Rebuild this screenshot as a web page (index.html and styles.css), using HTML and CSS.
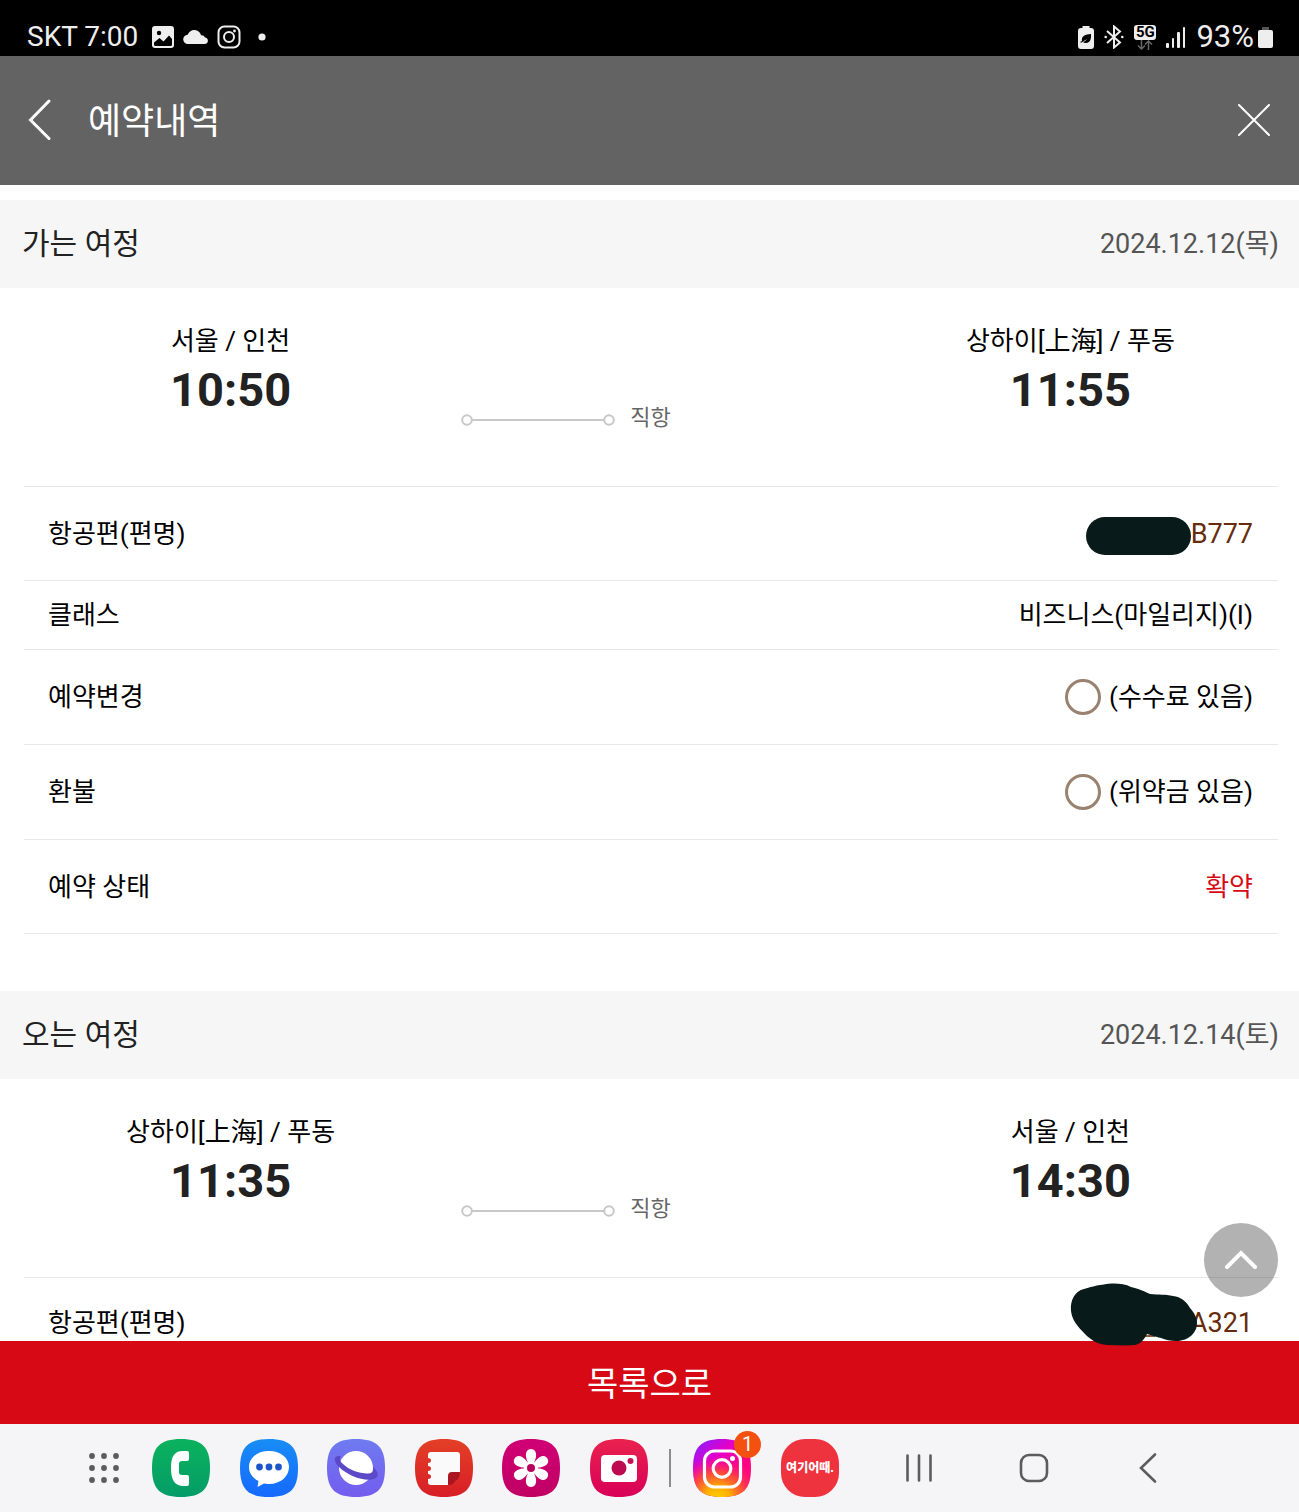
FILE: index.html
```html
<!DOCTYPE html>
<html lang="ko">
<head>
<meta charset="utf-8">
<meta name="viewport" content="width=device-width, initial-scale=1">
<title>예약내역</title>
<link rel="stylesheet" href="styles.css">
</head>
<body>
<div class="app">
  <div class="status">
    <div class="status-group">
      <span class="status-text">SKT 7:00</span>
      <svg class="status-photo" width="22" height="22" viewBox="0 0 22 22"><rect width="22" height="22" rx="3" fill="#eee"/><circle cx="7" cy="7" r="2.2" fill="#000"/><path d="M2 16.5L7.5 12l4 3.500L17 9.500l3 3.500v5.500q0 1.500-1.500 1.500h-15Q2 20 2 18.500Z" fill="#000"/></svg>
      <svg width="25" height="16" viewBox="0 0 25 16"><path d="M5 15a4.600 4.600 0 0 1-.4-9.200C6 2.500 8.500 1 11 1c3.600 0 6.200 2.200 7 5.200 2.200-.2 3.200.6 3.700 2C26 8.600 26 15 21.500 15Z" fill="#eee"/></svg>
      <svg width="24" height="24" viewBox="0 0 24 24" fill="none" stroke="#eee" stroke-width="2"><rect x="1.500" y="1.500" width="21" height="21" rx="6"/><circle cx="12" cy="12" r="5"/><circle cx="17.500" cy="6" r="1.400" fill="#eee" stroke="none"/></svg>
      <svg class="status-more" width="8" height="8" viewBox="0 0 8 8"><circle cx="4" cy="4" r="3.600" fill="#eee"/></svg>
    </div>
    <div class="status-group status-right">
      <svg width="16" height="23" viewBox="0 0 16 23"><path d="M4.500 0h7v2H13q3 0 3 3v15q0 3-3 3H3q-3 0-3-3V5q0-3 3-3h1.500Z" fill="#eee"/><path d="M13 8c.5 5-1 9-5 9-1.500 0-2.500-.5-3-1 2-.7 3-1.700 4-3-2 1.200-3.500 2.500-5.800 3.800L2 16c1-.3 1.700-.7 2-1.200C3 10 7.500 8.500 13 8Z" fill="#000"/></svg>
      <svg class="status-bt" width="20" height="24" viewBox="0 0 20 24" fill="none" stroke="#eee" stroke-width="2"><path d="M3 6l13 11.500-6 5V1.500l6 5L3 18"/><circle cx="1.700" cy="12" r="1.300" fill="#eee" stroke="none"/><circle cx="18.300" cy="12" r="1.300" fill="#eee" stroke="none"/></svg>
      <div class="net"><span class="net-label">5G</span><svg width="16" height="10" viewBox="0 0 16 10" fill="none" stroke="#666" stroke-width="1.500"><path d="M4.500 0v9M1 5.500L4.500 9 8 5.500M11.500 10V1M8 4.500L11.500 1 15 4.500"/></svg></div>
      <svg class="status-signal" width="20" height="21" viewBox="0 0 20 21" fill="#eee"><rect y="16" width="3" height="5" rx="1"/><rect x="6" y="11" width="2" height="10" rx="1"/><rect x="11" y="5" width="3" height="16" rx="1"/><rect x="17" width="2" height="21" rx="1"/></svg>
      <span class="status-percent">93%</span>
      <svg width="15" height="21" viewBox="0 0 15 21"><path d="M4 0h7v4H4Z" fill="#555"/><rect y="3" width="15" height="18" rx="2" fill="#eee"/></svg>
    </div>
  </div>

  <header class="header">
    <button class="icon-button" type="button" aria-label="뒤로"><svg width="24" height="42" viewBox="0 0 24 42" fill="none" stroke="#fff" stroke-width="3" stroke-linecap="round"><path d="M21 2L2.500 21 21 39.500"/></svg></button>
    <h1 class="header-title">예약내역</h1>
    <button class="icon-button" type="button" aria-label="닫기"><svg width="32" height="32" viewBox="0 0 32 32" fill="none" stroke="#fff" stroke-width="2" stroke-linecap="round"><path d="M1 1l30 30M31 1L1 31"/></svg></button>
  </header>

  <main class="content">
    <section class="journey">
      <div class="journey-head"><h2 class="journey-title">가는 여정</h2><span class="journey-date">2024.12.12(목)</span></div>
      <div class="route">
        <div class="stop"><div class="city">서울 / 인천</div><div class="time">10:50</div></div>
        <div class="leg"><svg width="154" height="12" viewBox="0 0 154 12" fill="none" stroke="#c8c8c8" stroke-width="2"><path d="M11 6h132"/><circle cx="6" cy="6" r="4.800"/><circle cx="148" cy="6" r="4.800"/></svg><span class="leg-label">직항</span></div>
        <div class="stop"><div class="city">상하이[上海] / 푸동</div><div class="time">11:55</div></div>
      </div>
      <table class="details">
        <tr><th scope="row">항공편(편명)</th><td><div class="value flight"><span class="redaction"></span>B777</div></td></tr>
        <tr class="compact"><th scope="row">클래스</th><td>비즈니스(마일리지)(I)</td></tr>
        <tr class="roomy"><th scope="row">예약변경</th><td><div class="value"><span class="ring"></span>(수수료 있음)</div></td></tr>
        <tr class="roomy"><th scope="row">환불</th><td><div class="value"><span class="ring"></span>(위약금 있음)</div></td></tr>
        <tr><th scope="row">예약 상태</th><td class="confirmed">확약</td></tr>
      </table>
    </section>

    <section class="journey">
      <div class="journey-head"><h2 class="journey-title">오는 여정</h2><span class="journey-date">2024.12.14(토)</span></div>
      <div class="route">
        <div class="stop"><div class="city">상하이[上海] / 푸동</div><div class="time">11:35</div></div>
        <div class="leg"><svg width="154" height="12" viewBox="0 0 154 12" fill="none" stroke="#c8c8c8" stroke-width="2"><path d="M11 6h132"/><circle cx="6" cy="6" r="4.800"/><circle cx="148" cy="6" r="4.800"/></svg><span class="leg-label">직항</span></div>
        <div class="stop"><div class="city">서울 / 인천</div><div class="time">14:30</div></div>
      </div>
      <table class="details">
        <tr class="cut"><th scope="row">항공편(편명)</th><td><div class="value flight">A321</div><svg class="scribble" width="128" height="64" viewBox="0 0 128 64"><path d="M75 53h10" stroke="#8b5a3a" stroke-width="2"/><path d="M1 28C0 17 5 8 14 6 24 3 29 2 34 1.500 42 0 53 0 61 4 69 6 74 8 80 11 89 12 95 11 103 13c8 1 13 5 17 12 4 5 7 9 7 15 0 7-4 12-9 15-9 5-19 3-27 0-6-1-9-3-14-4-3 6-7 10-12 11-9 1-19 0-28 0C27 61 21 57 15 51 8 44 2 37 1 28Z" fill="#081a19"/></svg></td></tr>
      </table>
    </section>
  </main>

  <footer class="bottom">
    <button class="to-top" type="button" aria-label="맨 위로"><svg width="32" height="20" viewBox="0 0 32 20" fill="none" stroke="#fff" stroke-width="4" stroke-linecap="round"><path d="M2 17L16 3l14 14"/></svg></button>
    <button class="list-button" type="button">목록으로</button>
    <nav class="dock">
      <button class="icon-button" type="button" aria-label="앱"><svg width="32" height="32" viewBox="0 0 32 32" fill="#5c5c5c"><circle cx="4" cy="4" r="2.900"/><circle cx="16" cy="4" r="2.900"/><circle cx="28" cy="4" r="2.900"/><circle cx="4" cy="16" r="2.900"/><circle cx="16" cy="16" r="2.900"/><circle cx="28" cy="16" r="2.900"/><circle cx="4" cy="28" r="2.900"/><circle cx="16" cy="28" r="2.900"/><circle cx="28" cy="28" r="2.900"/></svg></button>
      <div class="apps">
        <a class="app-icon" href="#phone" aria-label="전화"><svg width="58" height="58" viewBox="0 0 58 58"><defs><path id="tile" d="M29 0C50 0 58 8 58 29S50 58 29 58 0 50 0 29 8 0 29 0Z"/><linearGradient id="green" x2="0" y2="1"><stop stop-color="#0bb25c"/><stop offset="1" stop-color="#049c68"/></linearGradient></defs><use href="#tile" fill="url(#green)"/><path d="M31 12h4q2 0 2 2v6q0 2-2 2h-5q-3 0-3 3v8q0 3 3 3h5q2 0 2 2v7q0 2-2 2h-3C22 47 19 40 19 29S22 12 31 12Z" fill="#fff"/></svg></a>
        <a class="app-icon" href="#messages" aria-label="메시지"><svg width="58" height="58" viewBox="0 0 58 58"><defs><linearGradient id="blue" x2="0" y2="1"><stop stop-color="#178df5"/><stop offset="1" stop-color="#1769ff"/></linearGradient></defs><use href="#tile" fill="url(#blue)"/><path d="M29 12c12 0 20 7 20 16s-8 17-20 17c-2 0-4 0-5-.4L17.500 48l1-6C12.500 39 9 34 9 28c0-9 8-16 20-16Z" fill="#fff"/><g fill="#1b55c9"><circle cx="19.500" cy="28" r="3.400"/><circle cx="29" cy="28" r="3.400"/><circle cx="38.500" cy="28" r="3.400"/></g></svg></a>
        <a class="app-icon" href="#internet" aria-label="인터넷"><svg width="58" height="58" viewBox="0 0 58 58"><defs><linearGradient id="violet" x2="0" y2="1"><stop stop-color="#6f7bf0"/><stop offset="1" stop-color="#745cef"/></linearGradient></defs><use href="#tile" fill="url(#violet)"/><circle cx="29" cy="29" r="17" fill="#fff"/><path d="M14 17C5 16 7 23 12 28c9 9 26 15 35 12 6-2 4-8-1-12 1 3 0 5-2 6-7 2-21-2-28-9-3-3-4-5-2-8Z" fill="#5b49c8"/></svg></a>
        <a class="app-icon" href="#notes" aria-label="노트"><svg width="58" height="58" viewBox="0 0 58 58"><defs><linearGradient id="red" x2="0" y2="1"><stop stop-color="#e33f26"/><stop offset="1" stop-color="#d71f27"/></linearGradient></defs><use href="#tile" fill="url(#red)"/><path d="M16 13h26q3 0 3 3v18H37q-3 0-3 3v9H16q-3 0-3-3v-3q3 0 3-2.500T13 35v-3q3 0 3-2.500T13 27v-3q3 0 3-2.500T13 19v-3q0-3 3-3Z" fill="#fafafa"/><path d="M33 46V37q0-4 4-4h8q0 7-5 9-1 4-7 4Z" fill="#a91520"/></svg></a>
        <a class="app-icon" href="#gallery" aria-label="갤러리"><svg width="58" height="58" viewBox="0 0 58 58"><defs><linearGradient id="magenta" x2="0" y2="1"><stop stop-color="#d00075"/><stop offset="1" stop-color="#c00063"/></linearGradient><path id="petal" d="M29 26C24 20 23 11 29 11s5 9 0 15Z" stroke="#fff" stroke-width="2" stroke-linejoin="round"/></defs><use href="#tile" fill="url(#magenta)"/><g fill="#fff"><use href="#petal"/><use href="#petal" transform="rotate(60 29 29)"/><use href="#petal" transform="rotate(120 29 29)"/><use href="#petal" transform="rotate(180 29 29)"/><use href="#petal" transform="rotate(240 29 29)"/><use href="#petal" transform="rotate(300 29 29)"/><circle cx="29" cy="29" r="7"/></g><circle cx="29" cy="29" r="4" fill="#b9005c"/></svg></a>
        <a class="app-icon" href="#camera" aria-label="카메라"><svg width="58" height="58" viewBox="0 0 58 58"><defs><linearGradient id="rose" x2="0" y2="1"><stop stop-color="#e9224e"/><stop offset="1" stop-color="#d80058"/></linearGradient></defs><use href="#tile" fill="url(#rose)"/><rect x="11" y="16" width="36" height="27" rx="4" fill="#fff"/><circle cx="29" cy="29" r="7.500" fill="#bc0b50"/><circle cx="40.500" cy="22" r="3" fill="#c80f52"/></svg></a>
      </div>
      <span class="divider"></span>
      <a class="app-icon" href="#instagram" aria-label="Instagram"><svg width="58" height="58" viewBox="0 0 58 58"><defs><linearGradient id="insta" x1=".1" y1="0" x2=".9" y2=".9"><stop stop-color="#8a1cff"/><stop offset=".35" stop-color="#e400c8"/><stop offset=".7" stop-color="#ff0085"/><stop offset="1" stop-color="#ff1570"/></linearGradient><radialGradient id="glow" cx=".42" cy="1.050" r=".75"><stop stop-color="#ffd400"/><stop offset=".3" stop-color="#ffb000"/><stop offset=".65" stop-color="#ff5030" stop-opacity=".85"/><stop offset="1" stop-color="#ff1080" stop-opacity="0"/></radialGradient></defs><use href="#tile" fill="url(#insta)"/><use href="#tile" fill="url(#glow)"/><g fill="none" stroke="#fff" stroke-width="3.200"><rect x="11.500" y="12" width="36" height="36" rx="10"/><circle cx="29" cy="29.500" r="8.800"/></g><circle cx="39.500" cy="19.500" r="2.500" fill="#fff"/></svg><span class="badge">1</span></a>
      <a class="app-icon yeogi" href="#yeogi">여기어때.</a>
      <div class="system">
        <button class="icon-button" type="button" aria-label="최근 앱"><svg width="32" height="32" viewBox="0 0 32 32" stroke="#5c5c5c" stroke-width="2.600" stroke-linecap="round"><path d="M4.500 3.500v25M16 3.500v25M27.500 3.500v25"/></svg></button>
        <button class="icon-button" type="button" aria-label="홈"><svg width="32" height="32" viewBox="0 0 32 32" fill="none" stroke="#5c5c5c" stroke-width="2.600"><rect x="3" y="3" width="26" height="26" rx="8"/></svg></button>
        <button class="icon-button" type="button" aria-label="뒤로 가기"><svg width="32" height="32" viewBox="0 0 32 32" fill="none" stroke="#5c5c5c" stroke-width="2.600" stroke-linecap="round"><path d="M23 2.500L9 16l14 13.500"/></svg></button>
      </div>
    </nav>
  </footer>
</div>
</body>
</html>
```
FILE: styles.css
```css
* { box-sizing: border-box; }

body {
  margin: 0;
  background: #fff;
  color: #000;
  font-family: Roboto, "Noto Sans CJK KR", sans-serif;
  font-size: 26px;
  line-height: 38px;
}

svg { display: block; flex: none; }

button {
  border: 0;
  padding: 0;
  font: inherit;
  cursor: pointer;
}

.icon-button { background: none; }

.app {
  display: flex;
  flex-direction: column;
  min-height: 100vh;
}

/* Phone status bar */
.status {
  display: flex;
  justify-content: space-between;
  padding: 18px 26px 0 27px;
  background: #000;
  color: #eee;
}

.status-group {
  display: flex;
  align-items: center;
  gap: 9px;
}

.status-text { font-size: 28px; }
.status-photo { margin-left: 5px; }
.status-more { margin-left: 8px; }
.status-right { gap: 10px; }
.status-percent { margin-right: -6px; font-size: 31px; }

.net {
  display: flex;
  flex-direction: column;
  align-items: center;
}

.net-label {
  width: 22px;
  border-radius: 3px;
  background: #eee;
  color: #000;
  font-size: 15px;
  font-weight: 700;
  line-height: 15px;
  text-align: center;
}

/* Page header */
.header {
  display: flex;
  align-items: center;
  gap: 36px;
  padding: 38px 29px 39px 28px;
  background: #636363;
  color: #fff;
}

.header-title {
  flex: 1;
  margin: 0;
  padding-top: 4px;
  font-size: 36px;
  font-weight: 400;
  line-height: 48px;
}

/* Journeys */
.content {
  flex: 1;
  padding-top: 15px;
}

.journey + .journey { margin-top: 57px; }

.journey-head {
  display: flex;
  align-items: center;
  justify-content: space-between;
  padding: 24px 20px 24px 22px;
  background: #f6f6f6;
  line-height: 40px;
}

.journey-title {
  margin: 0;
  color: #222;
  font-size: 30px;
  font-weight: 400;
}

.journey-date {
  color: #555;
  font-size: 27px;
}

.route {
  display: grid;
  grid-template-columns: 35.5% 1fr 35.2%;
  padding: 34px 0 48px;
  text-align: center;
}

.stop { padding-bottom: 20px; }

.time {
  margin-top: 2px;
  color: #222;
  font-size: 47px;
  font-weight: 700;
  line-height: 56px;
}

.leg {
  display: flex;
  align-items: center;
  align-self: end;
  gap: 15px;
  color: #666;
  font-size: 22px;
  line-height: 32px;
}

.leg-label { padding-bottom: 4px; }

.details {
  width: calc(100% - 45px);
  margin: 0 21px 0 24px;
  border-collapse: separate;
  border-spacing: 0;
  border-top: 1px solid #e8e8e8;
}

.details th,
.details td {
  padding: 28px 25px 27px 24px;
  border-bottom: 1px solid #e8e8e8;
  font-weight: 400;
  text-align: left;
}

.details td {
  position: relative;
  text-align: right;
}

.details .compact th,
.details .compact td { padding-top: 15px; padding-bottom: 15px; }

.details .roomy th,
.details .roomy td { padding-bottom: 28px; }

.details .cut th,
.details .cut td {
  padding-top: 27px;
  padding-bottom: 0;
  border-bottom: 0;
  line-height: 36px;
}

.value {
  display: flex;
  align-items: center;
  justify-content: flex-end;
  gap: 8px;
}

.details .confirmed { color: #d60915; }

.flight {
  gap: 0;
  color: #662b0a;
  font-size: 27px;
}

.redaction {
  width: 105px;
  height: 38px;
  margin-bottom: -4px;
  border-radius: 19px;
  background: #081a19;
}

.ring {
  width: 36px;
  height: 36px;
  border: 3px solid #9a8270;
  border-radius: 50%;
}

.scribble {
  position: absolute;
  z-index: 2;
  top: 5px;
  right: 80px;
}

/* Pinned actions and phone dock */
.bottom {
  position: sticky;
  z-index: 1;
  bottom: 0;
}

.to-top {
  position: absolute;
  right: 21px;
  bottom: 215px;
  display: grid;
  place-items: center;
  width: 74px;
  height: 74px;
  border-radius: 50%;
  background: rgba(0, 0, 0, 0.3);
}

.list-button {
  display: block;
  width: 100%;
  padding: 19px 0 16px;
  background: #d60915;
  color: #fff;
  font-size: 34px;
  line-height: 48px;
}

.dock {
  display: flex;
  align-items: center;
  padding: 15px 135px 15px 88px;
  background: #f5f5f8;
}

.apps {
  display: flex;
  flex: 0 1 496px;
  justify-content: space-between;
  margin: 0 21px 0 32px;
}

.divider {
  width: 2px;
  height: 38px;
  margin-right: 22px;
  background: #8c8c8f;
}

.app-icon {
  position: relative;
  flex: none;
  width: 58px;
  height: 58px;
}

.badge {
  position: absolute;
  top: -8px;
  right: -10px;
  width: 27px;
  height: 27px;
  border-radius: 50%;
  background: #f4500f;
  color: #fff;
  font-size: 20px;
  line-height: 27px;
  text-align: center;
}

.yeogi {
  margin-left: 30px;
  border-radius: 24px;
  background: #ee323e;
  color: #fff;
  font-size: 12px;
  font-weight: 900;
  line-height: 58px;
  text-align: center;
  text-decoration: none;
  white-space: nowrap;
}

.system {
  display: flex;
  flex: 1;
  justify-content: space-between;
  margin-left: 64px;
}
```
